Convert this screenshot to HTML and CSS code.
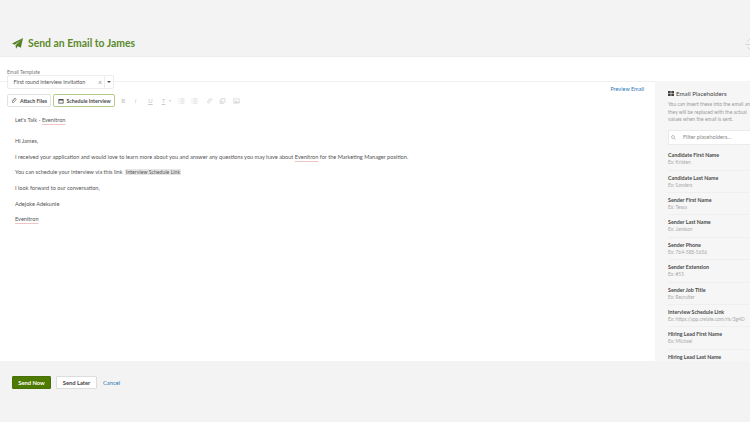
FILE: index.html
```html
<!DOCTYPE html>
<html lang="en">
<head>
<meta charset="utf-8">
<title>Send an Email to James</title>
<link rel="stylesheet" href="styles.css">
</head>
<body>
<div class="page">
  <header class="head">
    <svg class="plane" viewBox="0 0 12 12"><path d="M12 0 L9.7 10.6 L6.2 9.1 L4.4 11.6 L3.9 8 L9.6 2.4 L2.9 7.3 L0 6 Z"/></svg>
    <h1 class="title">Send an Email to James</h1>
    <svg class="close" viewBox="0 0 5 12"><path d="M5 1 L2 4 M0 6.500 h5 M2 9 L5 11.500" stroke="#d8d8d8" fill="none"/></svg>
  </header>
  <main class="main">
    <div class="template">
      <label class="tpl-label">Email Template</label>
      <div class="select">
        <span class="sel-text">First round interview invitation</span>
        <span class="sel-x">×</span>
        <span class="sel-arrow"></span>
      </div>
    </div>
    <div class="work">
      <section class="editor">
        <div class="toolbar">
          <button class="btn"><svg class="ico" viewBox="0 0 12 12"><path d="M7 3 L3 7 a1.4 1.4 0 0 0 2 2 L9.4 4.6 a2.3 2.3 0 0 0 -3.3 -3.3 L1.8 5.6" fill="none" stroke="#444" stroke-width="1.2"/></svg>Attach Files</button>
          <button class="btn btn-sched"><svg class="ico" viewBox="0 0 12 12"><path d="M1 2 h10 v9 h-10 z M2.5 5 v4.5 h7 V5 z" fill="#444" fill-rule="evenodd"/></svg>Schedule Interview</button>
          <div class="fmt">
            <span class="f fb">B</span><span class="f fi">I</span><span class="f fu">U</span><span class="f ft">T</span><span class="caret"></span>
            <svg class="fi-ico first" viewBox="0 0 10 10"><path d="M3 1.5 h7 M3 5 h7 M3 8.500 h7 M0 1.500 h1.500 M0 5 h1.500 M0 8.500 h1.500" stroke="#c4c4c4" fill="none"/></svg>
            <svg class="fi-ico" viewBox="0 0 10 10"><path d="M3 1.500 h7 M3 5 h7 M3 8.500 h7 M0 1.500 h1.500 M0 5 h1.500 M0 8.500 h1.500" stroke="#c4c4c4" fill="none"/></svg>
            <svg class="fi-ico wide" viewBox="0 0 10 10"><path d="M6 2.500 L2.500 6 a1 1 0 0 0 2 2 L8.500 4 a1.800 1.800 0 0 0 -2.800 -2.500 L1.500 5.500" stroke="#c4c4c4" fill="none"/></svg>
            <svg class="fi-ico" viewBox="0 0 10 10"><path d="M3 1 h6 v6 h-6 z M1 3 v6 h6" stroke="#c4c4c4" fill="none"/></svg>
            <svg class="fi-ico" viewBox="0 0 10 10"><path d="M.5 1.500 h9 v7 h-9 z" stroke="#c4c4c4" fill="none"/><path d="M1.500 7.500 L4 4.500 L6 6.500 L7 5.500 L8.500 7.500 z" fill="#c4c4c4"/></svg>
          </div>
          <a class="preview">Preview Email</a>
        </div>
        <div class="body">
          <p class="subject">Let's Talk - <span class="sp">Evenitron</span></p>
          <p>Hi James,</p>
          <p>I received your application and would love to learn more about you and answer any questions you may have about <span class="sp">Evenitron</span> for the Marketing Manager position.</p>
          <p>You can schedule your interview via this link <span class="tag">Interview Schedule Link</span></p>
          <p>I look forward to our conversation,</p>
          <p>Adejoke Adekunle</p>
          <p><span class="sp">Evenitron</span></p>
        </div>
      </section>
      <aside class="side">
        <h2 class="side-title"><svg class="side-ico" viewBox="0 0 10 8"><path d="M0 0 h4.500 v3.500 h-4.500 z M5.500 0 h4.500 v3.500 h-4.500 z M0 4.500 h4.500 v3.500 h-4.500 z M5.500 4.500 h4.500 v3.500 h-4.500 z" fill="#444"/></svg>Email Placeholders</h2>
        <p class="side-note">You can insert these into the email and<br>they will be replaced with the actual<br>values when the email is sent.</p>
        <div class="filter"><svg class="search" viewBox="0 0 10 10"><circle cx="4" cy="4" r="3" fill="none" stroke="#888"/><path d="M6.200 6.200 L9.500 9.500" stroke="#888"/></svg>Filter placeholders...</div>
        <ul class="list">
          <li><b>Candidate First Name</b><span>Ex: Kristen</span></li>
          <li><b>Candidate Last Name</b><span>Ex: Sanders</span></li>
          <li><b>Sender First Name</b><span>Ex: Tessa</span></li>
          <li><b>Sender Last Name</b><span>Ex: Jamison</span></li>
          <li><b>Sender Phone</b><span>Ex: 764-588-5656</span></li>
          <li><b>Sender Extension</b><span>Ex: #55</span></li>
          <li><b>Sender Job Title</b><span>Ex: Recruiter</span></li>
          <li><b>Interview Schedule Link</b><span>Ex: https://app.crelate.com/rls/3g4D</span></li>
          <li><b>Hiring Lead First Name</b><span>Ex: Michael</span></li>
          <li><b>Hiring Lead Last Name</b></li>
        </ul>
      </aside>
    </div>
  </main>
  <footer class="foot">
    <button class="send">Send Now</button>
    <button class="later">Send Later</button>
    <a class="cancel">Cancel</a>
  </footer>
</div>
</body>
</html>
```
FILE: styles.css
```css
* { box-sizing: border-box; }
html, body { margin: 0; padding: 0; }
body { font-family: Lato, "Open Sans", sans-serif; color: #444; background: #f3f3f3; }
.page { width: 750px; height: 422px; overflow: hidden; display: flex; flex-direction: column; }
.head { height: 57px; flex: none; background: #f3f3f3; display: flex; align-items: flex-end; gap: 5px; padding: 0 0 6px 12px; border-bottom: 1px solid #ececec; }
.plane { width: 11px; height: 11px; fill: #558026; margin-bottom: 1px; }
.title { margin: 0; font-size: 10.400px; line-height: 13px; font-weight: 700; color: #5b8a2a; }
.close { width: 5px; height: 12px; margin-left: auto; }
.main { height: 304px; flex: none; background: #fff; display: flex; flex-direction: column; }
.template { height: 24px; flex: none; padding: 12px 0 0 7px; position: relative; z-index: 1; }
.tpl-label { display: block; font-size: 5px; line-height: 6px; color: #777; }
.select { width: 107px; height: 14px; background: #fff; border: 1px solid #ececec; border-radius: 2px; display: flex; align-items: center; font-size: 5.300px; color: #555; padding-left: 5.500px; }
.sel-text { flex: 1; }
.sel-x { color: #999; font-size: 7px; margin-right: 2px; }
.sel-arrow { width: 9px; height: 12px; border-left: 1px solid #eee; position: relative; }
.sel-arrow::after { content: ""; position: absolute; left: 2px; top: 5px; border: 2px solid transparent; border-top: 2px solid #555; }
.work { flex: 1; min-height: 0; display: flex; }
.editor { width: 655px; flex: none; border-top: 1px solid #f0f0f0; padding: 0 0 0 7px; }
.toolbar { display: flex; align-items: center; gap: 2px; height: 25px; padding-top: 12px; position: relative; }
.btn { height: 13px; font: 700 5.200px Lato, sans-serif; color: #4a4a4a; background: #fff; border: 1px solid #e2e2e2; border-radius: 2px; padding: 0 3px; display: flex; align-items: center; gap: 3px; }
.btn-sched { border: 1px solid #b6cc8b; padding: 0 3.500px; }
.ico { width: 6px; height: 6px; }
.fmt { display: flex; align-items: center; margin-left: 4px; color: #c8c8c8; font-size: 6px; }
.f { width: 13.500px; }
.fb { font-weight: 700; }
.fi { font-style: italic; }
.fu { text-decoration: underline; }
.ft { width: 7px; text-decoration: underline; }
.caret { width: 0; height: 0; border: 1.500px solid transparent; border-top: 2px solid #c8c8c8; margin-top: 2px; }
.fi-ico { width: 7px; height: 6px; margin-right: 6.500px; }
.first { margin-left: 7px; }
.wide { margin-left: 1px; }
.preview { position: absolute; right: 11px; top: 4px; font-size: 5.500px; color: #2f7ab8; }
.body { padding: 9px 0 0 8px; font-size: 5.600px; color: #555; }
.body p { margin: 0; height: 15.700px; line-height: 8px; }
.body .subject { height: 21px; }
.sp { text-decoration: underline #f0c4c4 .5px; text-underline-offset: 1.500px; }
.tag { background: #e6e6e6; padding: 0 1px; margin-left: 1px; font-size: 5.200px; }
.side { flex: 1; background: #f6f6f6; padding: 8px 0 0 13px; overflow: hidden; min-width: 0; }
.side-title { margin: 0; font-size: 6.200px; font-weight: 400; color: #444; line-height: 9px; display: flex; align-items: center; gap: 2px; white-space: nowrap; }
.side-ico { width: 6px; height: 5px; flex: none; }
.side-note { margin: 3px 0 0; font-size: 5px; line-height: 7.600px; color: #999; white-space: nowrap; }
.filter { width: 100px; height: 15px; margin-top: 6px; background: #fff; border: 1px solid #ebebeb; display: flex; align-items: center; font-size: 5.500px; color: #888; gap: 7px; padding-left: 2px; white-space: nowrap; }
.search { width: 5px; height: 5px; }
.list { list-style: none; margin: 3.500px 0 0; padding: 0; width: 100px; }
.list li { height: 22.400px; padding-top: 4px; border-bottom: 1px solid #efefef; white-space: nowrap; }
.list b { display: block; font-size: 5.300px; line-height: 7px; font-weight: 700; color: #4a4a4a; }
.list span { display: block; font-size: 4.800px; line-height: 7px; color: #a8a8a8; }
.foot { flex: 1; background: #f3f3f3; display: flex; align-items: center; padding: 0 0 18px 12px; gap: 5px; }
.send { width: 39px; height: 13px; padding: 0; background: #4f7a00; border: 1px solid #45700a; border-radius: 1px; color: #fff; font: 700 5.800px Lato, sans-serif; }
.later { width: 41px; height: 13px; padding: 0; background: #fff; border: 1px solid #ddd; border-radius: 1px; color: #444; font: 700 5.800px Lato, sans-serif; }
.cancel { font-size: 5.800px; color: #2f7ab8; margin-left: 1px; }
```
